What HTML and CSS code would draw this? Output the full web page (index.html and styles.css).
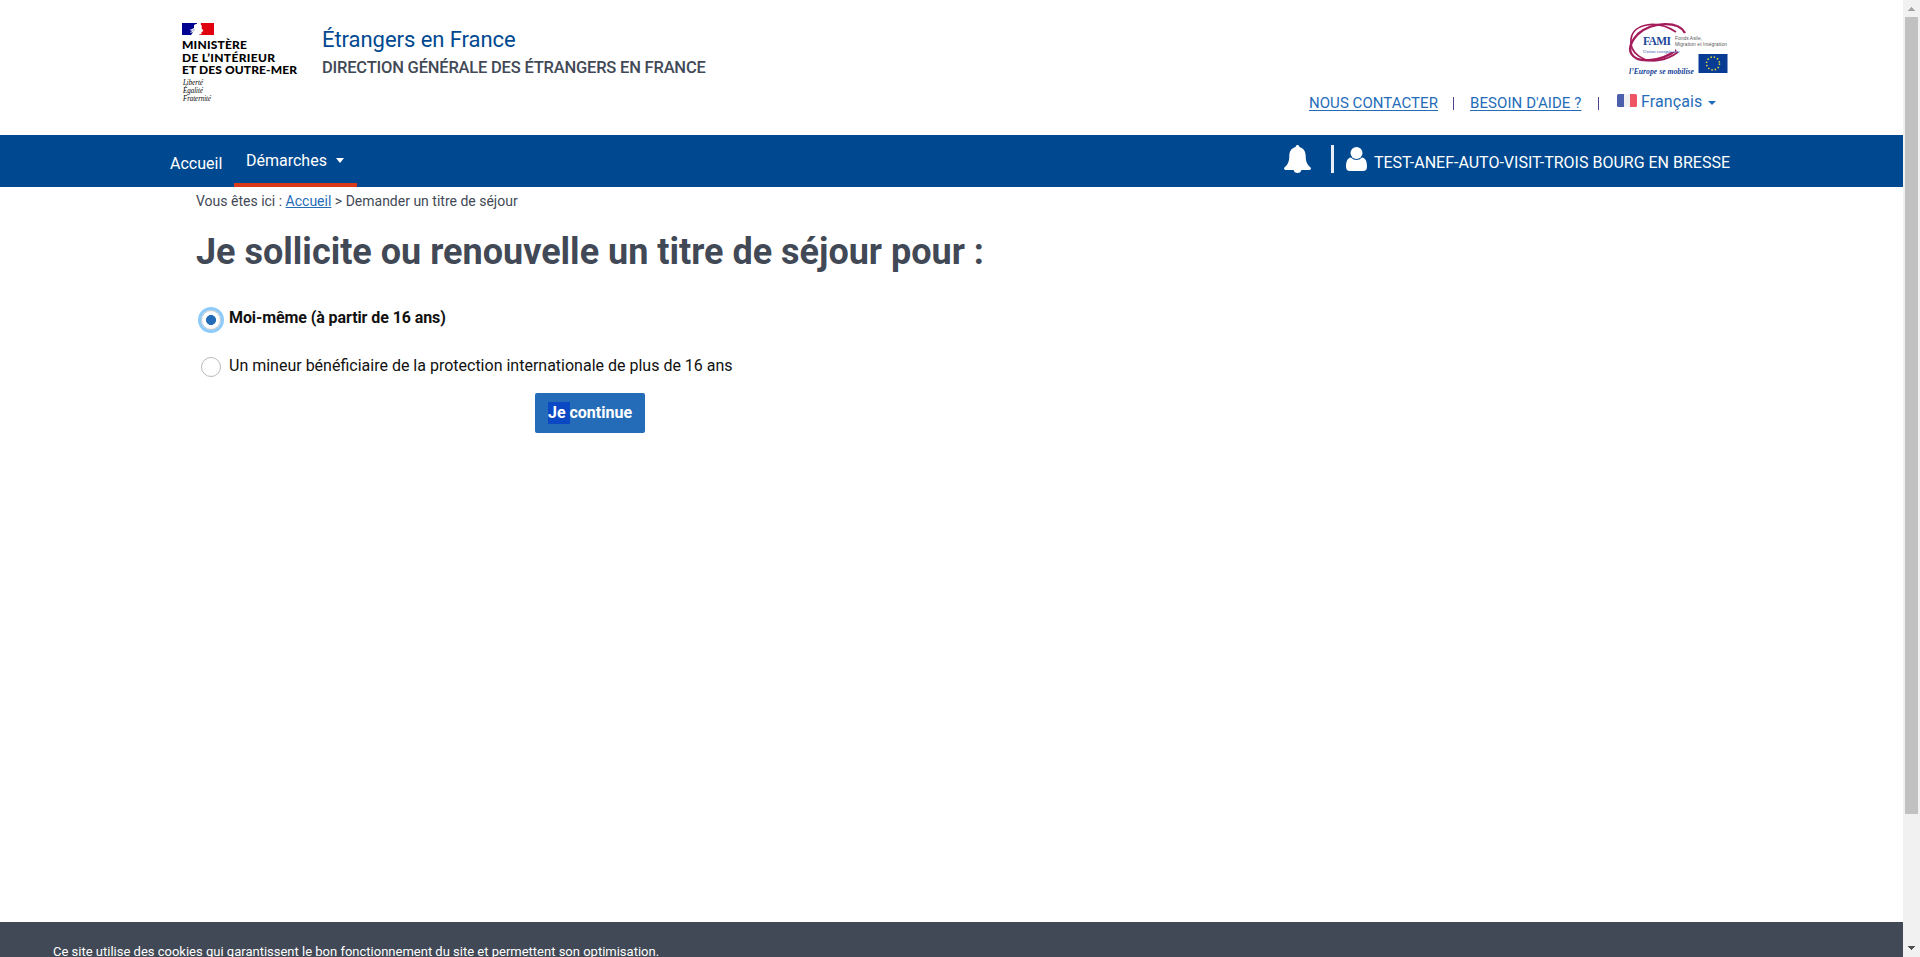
FILE: index.html
```html
<!DOCTYPE html>
<html lang="fr">
<head>
<meta charset="utf-8">
<title>Étrangers en France</title>
<link rel="stylesheet" href="styles.css">
</head>
<body>
<div class="window">
  <div class="page">
    <header class="header">
      <svg class="ministry" viewBox="0 0 118 84" width="118" height="84">
        <path fill="#000091" d="M0 0h15v12H0z"/>
        <path fill="#e1000f" d="M19 0h13v12H17z"/>
        <path fill="#fff" d="M12 2q3-2 6-1l2 2-.5 2 2 3-2 1v2l-4 1H9l2-3-3 1 2-2-2-1 4-2z"/>
        <path d="M8 7l4 1M8 9l3 1M11 6l2 1" stroke="#8d8dcc" stroke-width=".7"/>
        <g class="ministry-name">
          <text x="0" y="26" textLength="65">MINISTÈRE</text>
          <text x="0" y="38.500" textLength="93">DE L’INTÉRIEUR</text>
          <text x="0" y="51" textLength="115">ET DES OUTRE-MER</text>
        </g>
        <g class="motto">
          <text x="1" y="62" textLength="20" lengthAdjust="spacingAndGlyphs">Liberté</text>
          <text x="1" y="70" textLength="20" lengthAdjust="spacingAndGlyphs">Égalité</text>
          <text x="1" y="78" textLength="28" lengthAdjust="spacingAndGlyphs">Fraternité</text>
        </g>
      </svg>
      <div class="service">
        <div class="service-name">Étrangers en France</div>
        <div class="service-owner">DIRECTION GÉNÉRALE DES ÉTRANGERS EN FRANCE</div>
      </div>
      <div class="header-side">
        <svg class="fami" viewBox="0 0 102 58" width="102" height="58">
          <g fill="none" stroke="#a51c5b">
            <path stroke-width="2.400" d="M57 13C51 1 25 1 10 14C-5 30 3 42 23 40C33 39 42 35 48 30"/>
            <path stroke-width="1.700" d="M48 12C28 -1 5 4 3 19C1 33 16 43 30 40.500C39 39 45 36 50 32"/>
          </g>
          <rect x="14" y="13" width="33" height="19" fill="#fff"/>
          <text class="fami-name" x="15" y="25" textLength="28">FAMI</text>
          <text class="fami-union" x="15" y="33" textLength="37" lengthAdjust="spacingAndGlyphs">Union européenne</text>
          <text class="fami-fund" x="47" y="20" textLength="27">Fonds Asile,</text>
          <text class="fami-fund" x="47" y="25.500" textLength="52">Migration et Intégration</text>
          <text class="fami-slogan" x="1" y="54" textLength="65" lengthAdjust="spacingAndGlyphs">l’Europe se mobilise</text>
          <rect x="70.500" y="34" width="29" height="19" fill="#073b94"/>
          <circle cx="85" cy="43.500" r="6.500" fill="none" stroke="#e8df38" stroke-width="1.500" stroke-dasharray="1.400 2.003"/>
        </svg>
        <div class="links">
          <a class="link contact">NOUS CONTACTER</a>
          <span class="sep"></span>
          <a class="link help">BESOIN D'AIDE ?</a>
          <span class="sep"></span>
          <span class="lang"><svg width="20" height="13" viewBox="0 0 20 13"><path fill="#4b5fad" d="M1.500 0H7v13H1.500Q0 13 0 11.500v-10Q0 0 1.500 0z"/><path fill="#f0f0f0" d="M7 0h6v13H7z"/><path fill="#f05565" d="M13 0h5.500Q20 0 20 1.500v10q0 1.500-1.500 1.500H13z"/></svg><span class="lang-name">Français</span><i class="caret"></i></span>
        </div>
      </div>
    </header>
    <nav class="nav">
      <a class="nav-home">Accueil</a>
      <a class="nav-active"><span>Démarches</span><i class="caret"></i></a>
      <div class="account">
        <svg class="bell" width="27" height="28" viewBox="0 0 28 28" preserveAspectRatio="none"><path fill="#fff" d="M14 0q2 0 2 2c4 1 6.500 4 6.500 9 0 6 2 9 5.500 12 0 1.500-1 2-2 2h-8q-.5 3-4 3t-4-3H2c-1 0-2-.5-2-2 3.500-3 5.500-6 5.500-12 0-5 2.500-8 6.500-9q0-2 2-2z"/></svg>
        <span class="divider"></span>
        <svg class="user" width="21" height="24" viewBox="0 0 21 24"><circle cx="10.500" cy="6" r="6" fill="#fff"/><path fill="#fff" d="M4.800 10.500Q10.500 15.500 16.200 10.500C19.500 11 21 14.500 21 19.500Q21 24 17 24H4Q0 24 0 19.500C0 14.500 1.500 11 4.800 10.500z"/></svg>
        <span class="account-name">TEST-ANEF-AUTO-VISIT-TROIS BOURG EN BRESSE</span>
      </div>
    </nav>
    <main class="main">
      <div class="breadcrumb">Vous êtes ici : <a>Accueil</a> &gt; Demander un titre de séjour</div>
      <h1 class="title">Je sollicite ou renouvelle un titre de séjour pour :</h1>
      <label class="option checked"><span class="radio"></span><span class="option-text">Moi-même (à partir de 16 ans)</span></label>
      <label class="option"><span class="radio"></span><span class="option-text">Un mineur bénéficiaire de la protection internationale de plus de 16 ans</span></label>
      <button class="continue"><span class="selected">Je </span>continue</button>
    </main>
    <footer class="cookies"><span>Ce site utilise des cookies qui garantissent le bon fonctionnement du site et permettent son optimisation.</span></footer>
  </div>
  <div class="scrollbar">
    <svg width="7" height="4" viewBox="0 0 7 4"><path fill="#a3a3a3" d="M3 0h1v1h1v1h1v1h1v1H0V3h1V2h1V1h1z"/></svg>
    <div class="thumb"></div>
    <svg class="down" width="7" height="4" viewBox="0 0 7 4"><path fill="#505050" d="M0 0h7v1H6v1H5v1H4v1H3V3H2V2H1V1H0z"/></svg>
  </div>
</div>
</body>
</html>
```
FILE: styles.css
```css
* { box-sizing: border-box; }
body { margin: 0; overflow: hidden; font-family: Roboto, "Liberation Sans", sans-serif; background: #fff; }
svg { display: block; flex: none; }
.window { display: flex; width: 1920px; height: 957px; }
.page { width: 1903px; height: 957px; display: flex; flex-direction: column; overflow: hidden; white-space: nowrap; }

.header { height: 135px; flex: none; display: flex; padding: 23px 173px 0 182px; }
.ministry-name { font: 900 12px Lato, sans-serif; }
.motto { font: italic 8px "Liberation Serif", serif; }
.service { padding-left: 22px; }
.service-name { font-size: 22px; line-height: 26px; margin-top: 4px; color: #004990; letter-spacing: -0.05px; }
.service-owner { font-size: 16.500px; font-weight: 500; line-height: 20px; margin-top: 5px; color: #424956; letter-spacing: -0.2px; }
.header-side { margin-left: auto; display: flex; flex-direction: column; align-items: flex-end; margin-top: -3px; }
.fami-name { font: bold 11.500px "Liberation Serif", serif; fill: #1c489b; }
.fami-union { font: 4.500px "Liberation Serif", serif; fill: #3864aa; }
.fami-fund { font: 4.800px "Liberation Sans", sans-serif; fill: #555; }
.fami-slogan { font: italic bold 8px "Liberation Serif", serif; fill: #16439a; }
.links { display: flex; width: 421px; padding-top: 14px; height: 34px; color: #256cb8; font-size: 15px; line-height: 20px; }
.link { text-decoration: underline; text-underline-offset: 2px; padding-top: 1px; }
.contact { width: 128px; letter-spacing: 0.05px; }
.help { width: 112px; letter-spacing: 0.08px; }
.sep { width: 1px; height: 13px; margin: 5px 16px 0; background: #55448d; }
.lang { display: flex; padding-left: 2px; font-size: 16px; }
.lang svg { margin-top: 2px; }
.lang-name { width: 61px; margin-left: 4px; margin-right: 1px; letter-spacing: 0.1px; }
.caret { width: 0; height: 0; border: 4px solid transparent; border-top-color: currentColor; border-bottom: 0; margin: 9px 0 0 5px; }

.nav { height: 52px; flex: none; display: flex; background: #004990; color: #fff; font-size: 16px; padding: 0 173px 0 170px; }
.nav-home { width: 64px; line-height: 20px; padding-top: 19px; }
.nav-active { width: 123px; height: 52px; border-bottom: 4px solid #d93b18; display: flex; padding: 16px 0 0 12px; line-height: 20px; }
.nav-active .caret { margin: 7px 0 0 9px; border-width: 5px 4.500px 0; }
.account { display: flex; margin-left: auto; padding-top: 10px; width: 446px; }
.divider { width: 3px; height: 28px; background: #e8eef5; margin-left: 20px; }
.user { margin: 2px 0 0 12px; }
.account-name { margin-left: 7px; line-height: 20px; padding-top: 8px; }

.main { flex: 1; padding: 5px 0 0 196px; }
.breadcrumb { font-size: 14px; line-height: 18px; color: #424956; }
.breadcrumb a { color: #256cb8; text-decoration: underline; }
.title { font-size: 36px; line-height: 44px; margin: 20px 0 0; color: #424956; font-weight: 700; }
.option { display: flex; color: #111; font-size: 16px; line-height: 20px; width: 700px; padding-left: 5px; }
.checked { font-weight: 700; margin-top: 34px; height: 48px; letter-spacing: -0.09px; }
.radio { width: 20px; height: 20px; border: 1px solid #bbb; border-radius: 50%; margin-top: 1px; }
.checked .radio { background: radial-gradient(circle, #256cb8 4.700px, #fff 5.300px); border-color: #bcc4cb; box-shadow: 0 0 0 3px #8dcbfb; margin-top: 2px; }
.option-text { margin-left: 8px; }
.continue { display: block; width: 110px; height: 40px; margin: 16px 0 0 339px; padding: 0; border: 0; border-radius: 2px; background: #256cb8; color: #fff; font: bold 16px Roboto, sans-serif; }
.selected { background: #0a48c4; white-space: pre; display: inline-block; line-height: 22px; }
.cookies { height: 35px; flex: none; background: #424956; color: #fff; font-size: 13px; line-height: 20px; padding: 20px 0 0 53px; }
.scrollbar { width: 17px; background: #f1f1f1; display: flex; flex-direction: column; align-items: center; padding-top: 7px; }
.thumb { width: 13px; height: 797px; margin-top: 6px; background: #c1c1c1; }
.down { margin-top: 132px; }
```
